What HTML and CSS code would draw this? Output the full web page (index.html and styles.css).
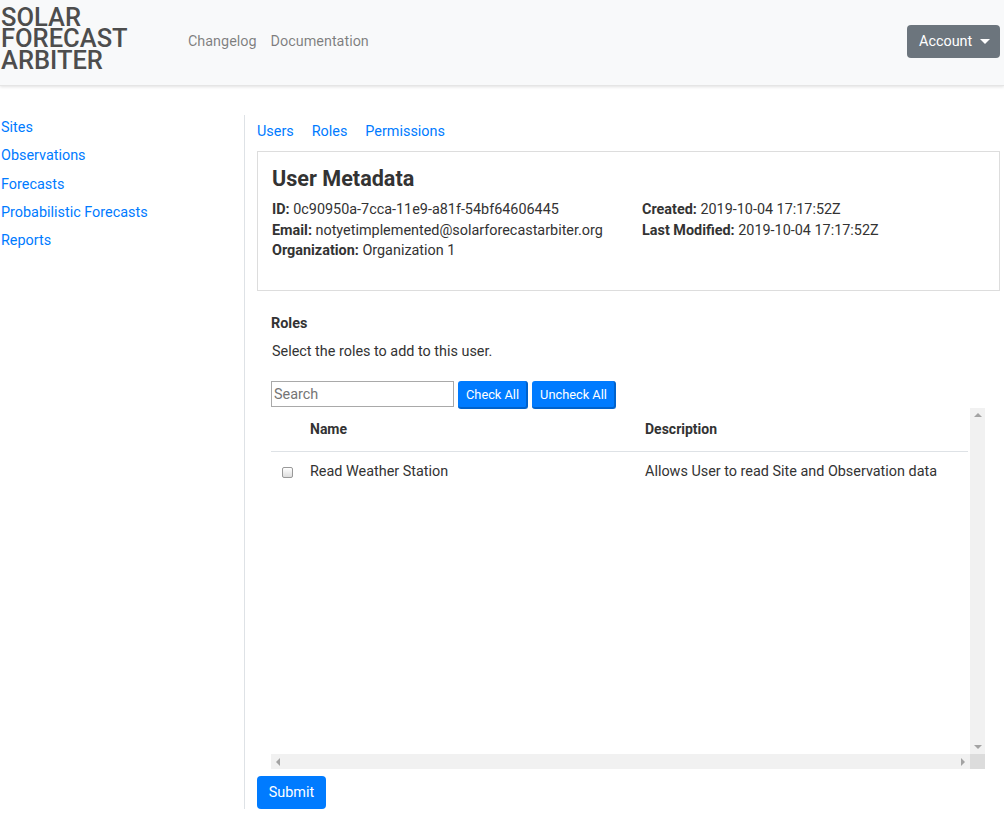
FILE: index.html
```html
<!DOCTYPE html>
<html>
<head>
<meta charset="utf-8">
<link rel="stylesheet" href="styles.css">
</head>
<body>
<header class="navbar">
  <div class="brand">SOLAR<br>FORECAST<br>ARBITER</div>
  <nav class="topnav">
    <a href="#">Changelog</a>
    <a href="#">Documentation</a>
  </nav>
  <button class="account">Account <span class="caret"></span></button>
</header>
<div class="layout">
  <aside class="sidebar">
    <a href="#">Sites</a>
    <a href="#">Observations</a>
    <a href="#">Forecasts</a>
    <a href="#">Probabilistic Forecasts</a>
    <a href="#">Reports</a>
  </aside>
  <main class="main">
    <nav class="tabs">
      <a href="#">Users</a>
      <a href="#">Roles</a>
      <a href="#">Permissions</a>
    </nav>
    <section class="card">
      <h2>User Metadata</h2>
      <div class="meta">
        <div class="col">
          <p><b>ID:</b> 0c90950a-7cca-11e9-a81f-54bf64606445</p>
          <p><b>Email:</b> notyetimplemented@solarforecastarbiter.org</p>
          <p><b>Organization:</b> Organization 1</p>
        </div>
        <div class="col">
          <p><b>Created:</b> 2019-10-04 17:17:52Z</p>
          <p><b>Last Modified:</b> 2019-10-04 17:17:52Z</p>
        </div>
      </div>
    </section>
    <section class="roles">
      <h3>Roles</h3>
      <p class="hint">Select the roles to add to this user.</p>
      <div class="tools">
        <input class="search" type="text" placeholder="Search">
        <button class="btn-sm">Check All</button>
        <button class="btn-sm">Uncheck All</button>
      </div>
      <div class="tablebox">
        <div class="tablearea">
          <table>
            <thead>
              <tr><th class="cb"></th><th class="name">Name</th><th>Description</th></tr>
            </thead>
            <tbody>
              <tr><td class="cb"><span class="check"></span></td><td class="name">Read Weather Station</td><td>Allows User to read Site and Observation data</td></tr>
            </tbody>
          </table>
        </div>
        <div class="vscroll"><span class="arr up"></span><span class="arr down"></span></div>
        <div class="hscroll"><span class="arr left"></span><span class="arr right"></span></div>
        <div class="corner"></div>
      </div>
    </section>
    <button class="submit">Submit</button>
  </main>
</div>
</body>
</html>
```
FILE: styles.css
```css
* { box-sizing: border-box; }
html, body { margin: 0; padding: 0; }
body {
  font-family: Roboto, "Liberation Sans", sans-serif;
  color: #333;
  background: #fff;
  font-size: 14.4px;
}
a { text-decoration: none; color: #007bff; }

.navbar {
  height: 86px;
  background: #f8f9fa;
  display: flex;
  align-items: center;
  padding: 0 4px 0 1px;
  box-shadow: 0 1px 3px rgba(0,0,0,0.12);
  border-bottom: 1px solid #e5e5e5;
}
.brand {
  font-size: 25.5px;
  line-height: 21.5px;
  color: #4d4d4d;
  font-weight: 500;
  margin-top: -7px;
  width: 172px;
}
.topnav { display: flex; flex: 1; margin-left: 8px; margin-top: -2px; }
.topnav a {
  color: rgba(0,0,0,0.5);
  font-size: 14.4px;
  padding: 0 7px;
}
.account {
  background: #6c757d;
  color: #fff;
  border: none;
  border-radius: 4px;
  height: 33px;
  width: 93px;
  font-family: inherit;
  font-size: 14.4px;
  padding: 0 12px;
  margin-bottom: 3px;
  display: flex;
  align-items: center;
  gap: 8px;
}
.caret {
  width: 0; height: 0;
  border-left: 5px solid transparent;
  border-right: 5px solid transparent;
  border-top: 5px solid #fff;
}

.layout { display: flex; padding-top: 29px; }
.sidebar {
  width: 244px;
  display: flex;
  flex-direction: column;
  padding: 3px 0 0 1px;
  gap: 9.25px;
}
.sidebar a { line-height: 19px; }
.main {
  flex: 1;
  border-left: 1px solid #dee2e6;
  padding: 9px 4px 0 12px;
}
.tabs { display: flex; gap: 18px; line-height: 16px; }
.card {
  margin-top: 11px;
  border: 1px solid #ddd;
  height: 140px;
  padding: 13px 14px;
}
.card h2 { margin: 0 0 8px; font-size: 21.6px; font-weight: 700; line-height: 27px; color: #333; }
.meta { display: flex; }
.meta .col:first-child { width: 370px; }
.meta p { margin: 0; line-height: 20.5px; }

.roles { padding-left: 14px; }
.roles h3 { margin: 24px 0 0; font-size: 14.4px; font-weight: 700; line-height: 17px; }
.hint { margin: 11px 0 0; line-height: 17px; padding-left: 1px; }
.tools { display: flex; gap: 4px; margin-top: 21px; height: 27px; }
.search {
  width: 183px;
  height: 26px;
  border: 1px solid #a9a9a9;
  font-family: inherit;
  font-size: 14.4px;
  padding: 1px 2px;
  color: #757575;
}
.search::placeholder { color: #757575; }
.btn-sm {
  background: #007bff;
  color: #fff;
  border: none;
  border-bottom: 2px solid #0062cc;
  border-right: 2px solid #0062cc;
  border-radius: 3px;
  font-family: inherit;
  font-size: 12.8px;
  height: 28px;
  padding: 0 7px 0 8px;
}
.tablebox {
  display: grid;
  grid-template-columns: 699px 15px;
  grid-template-rows: 346px 15px;
}
.tablearea { overflow: hidden; }
table { border-collapse: collapse; width: 697px; }
th { text-align: left; font-weight: 700; height: 43px; border-bottom: 1px solid #dee2e6; padding: 0; font-size: 14px; }
td { height: 40px; padding: 0; padding-top: 1px; }
.cb { width: 39px; padding-left: 11px; }
.name { width: 335px; }
.check {
  display: inline-block; width: 11px; height: 11px;
  border: 1px solid #999; border-radius: 2px;
  background: linear-gradient(#fff, #ddd);
  vertical-align: middle;
}
.vscroll, .hscroll { background: #f1f1f1; display: flex; }
.vscroll { flex-direction: column; justify-content: space-between; align-items: center; padding: 5px 0; }
.hscroll { justify-content: space-between; align-items: center; padding: 0 5px; }
.corner { background: #dcdcdc; }
.arr { width: 0; height: 0; }
.up { border-left: 4px solid transparent; border-right: 4px solid transparent; border-bottom: 4px solid #a3a3a3; }
.down { border-left: 4px solid transparent; border-right: 4px solid transparent; border-top: 4px solid #a3a3a3; }
.left { border-top: 4px solid transparent; border-bottom: 4px solid transparent; border-right: 4px solid #a3a3a3; }
.right { border-top: 4px solid transparent; border-bottom: 4px solid transparent; border-left: 4px solid #a3a3a3; }
.submit {
  display: block;
  margin: 7px 0 0 0;
  background: #007bff;
  color: #fff;
  border: none;
  border-radius: 4px;
  font-family: inherit;
  font-size: 14.4px;
  height: 33px;
  width: 69px;
}
```
